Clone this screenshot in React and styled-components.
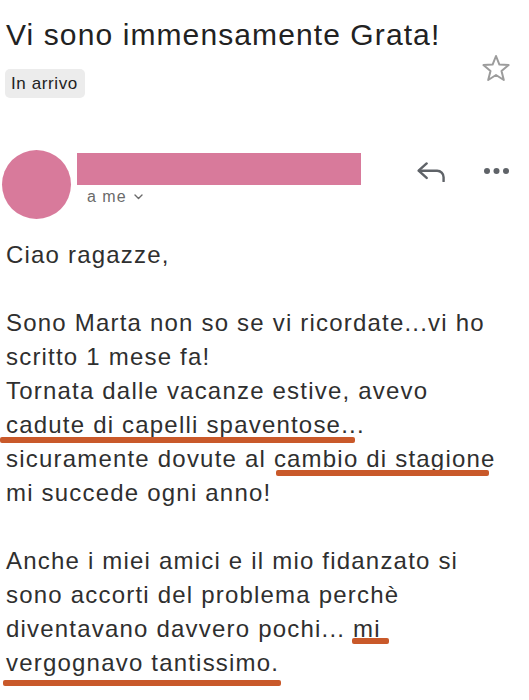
import React from "react";
import styled, { createGlobalStyle } from "styled-components";

const GlobalStyle = createGlobalStyle`
  html, body {
    margin: 0;
    padding: 0;
    background: #ffffff;
  }
  body {
    font-family: "Liberation Sans", Arial, sans-serif;
    color: #2b2b2b;
  }
`;

const Page = styled.div`
  width: 529px;
  height: 700px;
  overflow: hidden;
  box-sizing: border-box;
  padding: 17px 20px 0 4px;
`;

const Subject = styled.div`
  display: grid;
  grid-template-columns: 1fr auto;
  row-gap: 16px;
`;

const Title = styled.h1`
  grid-column: 1 / span 2;
  margin: 0 0 0 2px;
  font-size: 30px;
  line-height: 36px;
  font-weight: 400;
  letter-spacing: 1.1px;
  color: #222222;
  white-space: nowrap;
`;

const Chip = styled.span`
  justify-self: start;
  margin-left: 1px;
  padding: 0 7px 0 6px;
  height: 29px;
  line-height: 29px;
  font-size: 17px;
  letter-spacing: 0.6px;
  color: #222222;
  background: #ececec;
  border-radius: 5px;
`;

const StarButton = styled.span`
  display: flex;
  align-self: start;
  margin-top: -15px;
  margin-right: -2px;
  color: #9c9c9c;
`;

const SenderRow = styled.div`
  display: flex;
  align-items: flex-start;
  margin-top: 52px;
  margin-left: -2px;
`;

const Avatar = styled.div`
  width: 69px;
  height: 69px;
  flex: none;
  border-radius: 50%;
  background: #d87a9b;
`;

const SenderInfo = styled.div`
  display: flex;
  flex-direction: column;
  margin-left: 6px;
  padding-top: 3px;
`;

const NameBar = styled.div`
  width: 284px;
  height: 32px;
  background: #d87a9b;
`;

const Recipient = styled.div`
  display: flex;
  align-items: center;
  gap: 7px;
  margin-top: 2px;
  padding-left: 10px;
  font-size: 16px;
  line-height: 20px;
  letter-spacing: 1px;
  color: #6a6a6a;
`;

const Actions = styled.div`
  display: flex;
  align-items: center;
  gap: 38px;
  height: 32px;
  margin-top: 5px;
  margin-left: auto;
  color: #5f6368;
`;

const Body = styled.div`
  margin-top: 19px;
  margin-left: 2px;
  font-size: 24px;
  line-height: 34px;
  letter-spacing: 1.2px;
  color: #2f2f2f;
  white-space: nowrap;
`;

const Paragraph = styled.p`
  margin: 0 0 34px;
`;

const Mark = styled.span`
  position: relative;
  &::after {
    content: "";
    position: absolute;
    left: ${(p) => p.$l}px;
    right: ${(p) => p.$r}px;
    top: calc(100% + ${(p) => p.$dy}px);
    height: 6px;
    border-radius: 2px;
    background: #c9592a;
  }
`;

const Star = () => (
  <svg width="30" height="28" viewBox="0 0 30 28" fill="none">
    <polygon
      points="15,2 18.4,10.6 27.6,11.1 20.5,17 22.8,26 15,21 7.2,26 9.5,17 2.4,11.1 11.6,10.6"
      stroke="currentColor"
      strokeWidth="2"
      strokeLinejoin="round"
    />
  </svg>
);

const ReplyIcon = () => (
  <svg width="29" height="21" viewBox="3 6 18 13" fill="none">
    <polyline
      points="9 16.5 4 12 9 7.5"
      stroke="currentColor"
      strokeWidth="1.5"
      strokeLinecap="round"
      strokeLinejoin="round"
    />
    <path
      d="M19.5 18.5v-2.5a4 4 0 0 0-4-4H4.5"
      stroke="currentColor"
      strokeWidth="1.5"
      strokeLinecap="round"
    />
  </svg>
);

const Dots = () => (
  <svg width="25" height="8" viewBox="0 0 25 8">
    <circle cx="3" cy="4" r="3" fill="currentColor" />
    <circle cx="12.5" cy="4" r="3" fill="currentColor" />
    <circle cx="22" cy="4" r="3" fill="currentColor" />
  </svg>
);

const Chevron = () => (
  <svg width="9" height="6" viewBox="0 0 9 6" fill="none">
    <polyline
      points="1 1 4.5 4.5 8 1"
      stroke="#6a6a6a"
      strokeWidth="1.4"
      strokeLinecap="round"
      strokeLinejoin="round"
    />
  </svg>
);

export default function App() {
  return (
    <>
      <GlobalStyle />
      <Page>
        <Subject>
          <Title>Vi sono immensamente Grata!</Title>
          <Chip>In arrivo</Chip>
          <StarButton>
            <Star />
          </StarButton>
        </Subject>

        <SenderRow>
          <Avatar />
          <SenderInfo>
            <NameBar />
            <Recipient>
              a me <Chevron />
            </Recipient>
          </SenderInfo>
          <Actions>
            <ReplyIcon />
            <Dots />
          </Actions>
        </SenderRow>

        <Body>
          <Paragraph>Ciao ragazze,</Paragraph>
          <Paragraph>
            Sono Marta non so se vi ricordate...vi ho
            <br />
            scritto 1 mese fa!
            <br />
            Tornata dalle vacanze estive, avevo
            <br />
            <Mark $l={-6} $r={-14} $dy={-1}>
              cadute di capelli spaventose
            </Mark>
            ...
            <br />
            sicuramente dovute al{" "}
            <Mark $l={2} $r={7} $dy={-2}>
              cambio di stagione
            </Mark>
            <br />
            mi succede ogni anno!
          </Paragraph>
          <Paragraph>
            Anche i miei amici e il mio fidanzato si
            <br />
            sono accorti del problema perchè
            <br />
            diventavano davvero pochi...{" "}
            <Mark $l={-1} $r={-8} $dy={-4}>
              mi
            </Mark>
            <br />
            <Mark $l={-3} $r={-2} $dy={4}>
              vergognavo tantissimo.
            </Mark>
          </Paragraph>
        </Body>
      </Page>
    </>
  );
}
